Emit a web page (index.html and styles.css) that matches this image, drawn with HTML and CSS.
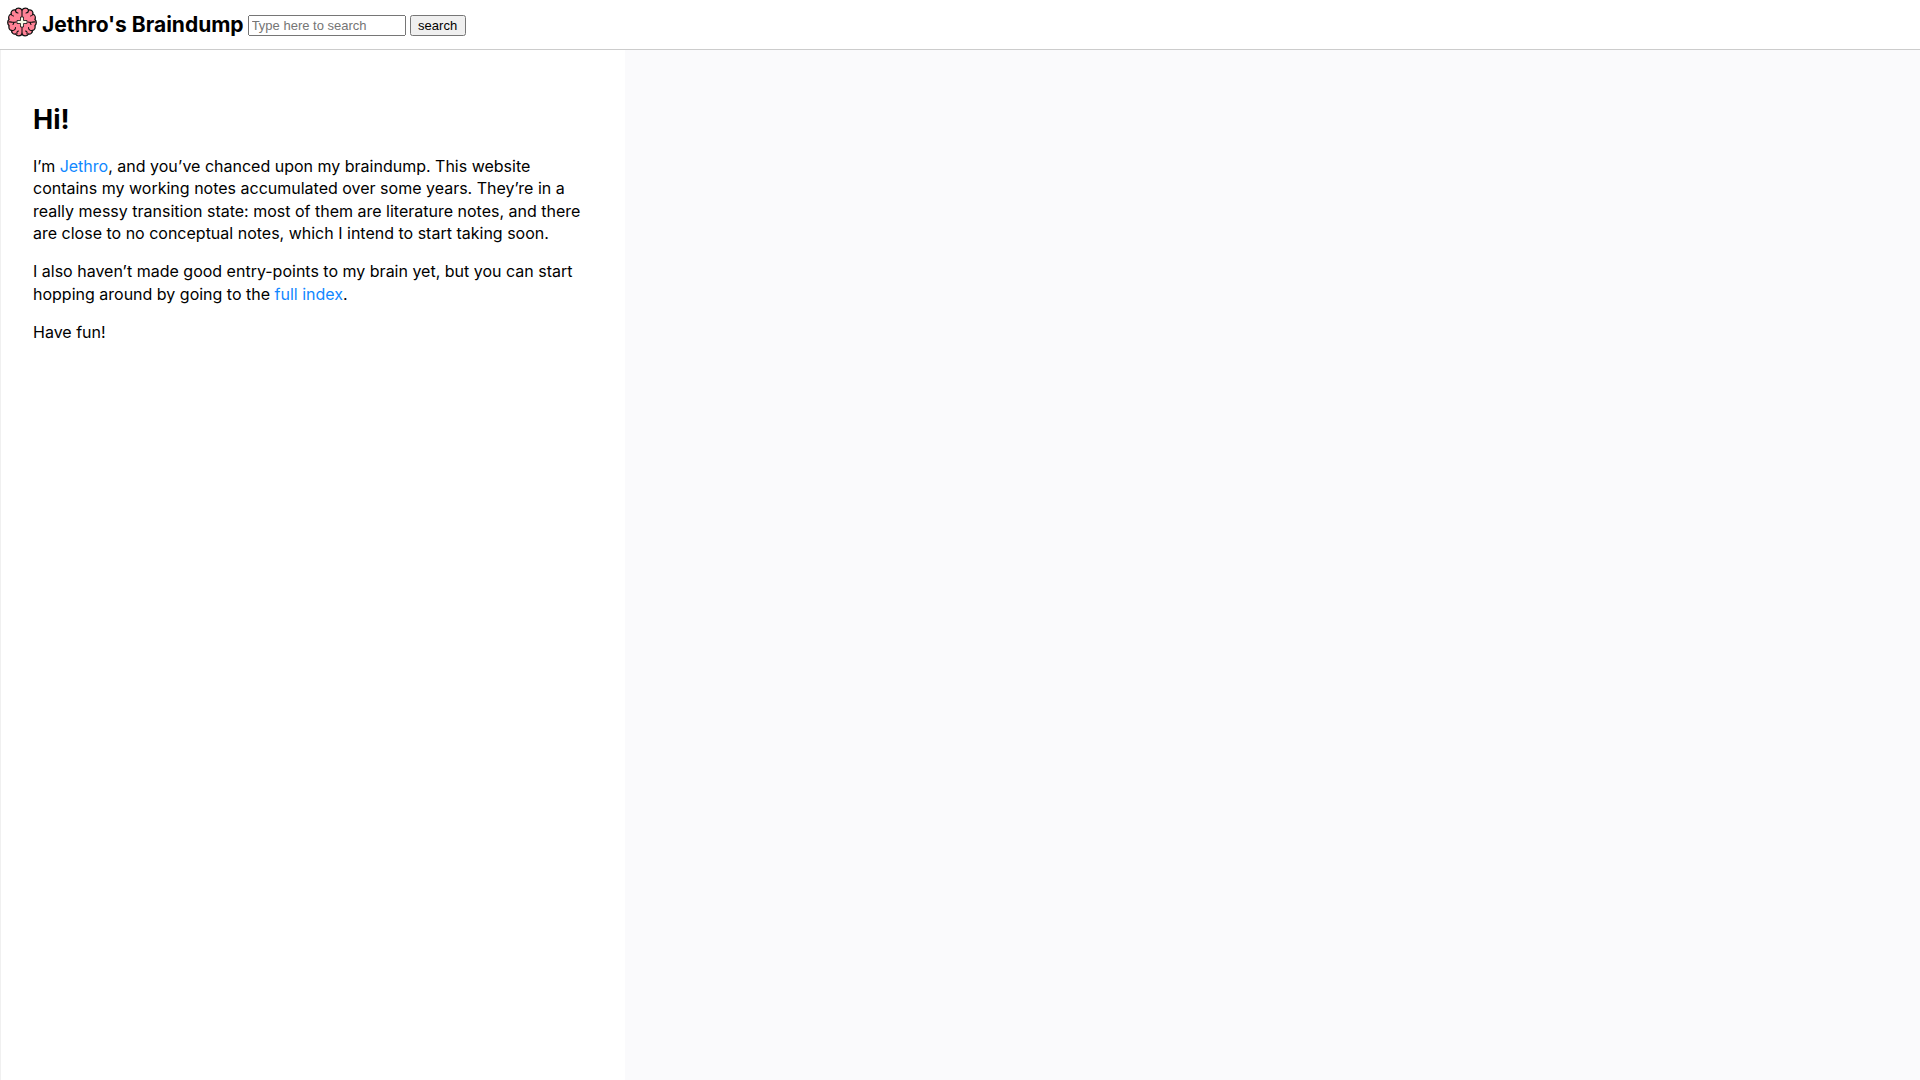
FILE: index.html
```html
<!DOCTYPE html>
<html lang="en">
<head>
<meta charset="utf-8">
<meta name="viewport" content="width=device-width, initial-scale=1">
<title>Jethro's Braindump</title>
<link rel="stylesheet" href="styles.css">
</head>
<body>
<header class="header">
  <a class="brand" href="/">
    <svg class="logo" viewBox="0 0 30 30" aria-hidden="true">
      <path class="lobe" d="M15 3C13.500 .5 9.500 .5 8.500 3 5.500 2.500 3.500 4.500 4.200 7 1.800 8 1.200 10.500 2 12.500 .3 14 .3 17 2 18.500 1.500 21 2.500 23 4.500 23.500 4.500 26 6.500 27.500 8.500 27 10 29.500 14 29.500 15 27 16 29.500 20 29.500 21.500 27 23.500 27.500 25.500 26 25.500 23.500 27.500 23 28.500 21 28 18.500 29.700 17 29.700 14 28 12.500 28.800 10.500 28.200 8 25.800 7 26.500 4.500 24.500 2.500 21.500 3 20.500 .5 16.500 .5 15 3Z"/>
      <path class="fold" d="M15 3V10M15 20V27M8.500 3C8.500 5 9.500 6 11 6M21.500 3C21.500 5 20.500 6 19 6M4.200 7C4.500 8.500 5.500 9 6.500 9M25.800 7C25.500 8.500 24.500 9 23.500 9M2 15C4 14.500 5.500 16 9 15M6 17.500 7 15.500M28 15C26 14.500 24.500 16 21 15M24 17.500 23 15.500M4.500 23.500C7 24 8.500 22.500 8.500 20.500M25.500 23.500C23 24 21.500 22.500 21.500 20.500M10 27C9.500 25 10.500 24 11.500 24M20 27C20.500 25 19.500 24 18.500 24"/>
      <path class="cross" d="M13.500 10H16.500V13.500H20V16.500H16.500V20H13.500V16.500H10V13.500H13.500Z"/>
    </svg>
    <span class="brand-name">Jethro's Braindump</span>
  </a>
  <form class="search">
    <input class="search-box" type="text" aria-label="Search notes" placeholder="Type here to search">
    <button class="search-button" type="submit">search</button>
  </form>
</header>
<main class="notes">
  <article class="note">
    <h1 class="note-title">Hi!</h1>
    <p>I’m <a href="#">Jethro</a>, and you’ve chanced upon my braindump. This website contains my working notes accumulated over some years. They’re in a really messy transition state: most of them are literature notes, and there are close to no conceptual notes, which I intend to start taking soon.</p>
    <p>I also haven’t made good entry-points to my brain yet, but you can start hopping around by going to the <a href="#">full index</a>.</p>
    <p>Have fun!</p>
  </article>
</main>
</body>
</html>
```
FILE: styles.css
```css
* { box-sizing: border-box; }

body {
  margin: 0;
  min-height: 100vh;
  display: flex;
  flex-direction: column;
  background: #fff;
  color: #000;
  font: 16px/1.4 Inter, "Liberation Sans", sans-serif;
}

.header {
  display: flex;
  align-items: flex-start;
  gap: 4px;
  padding: 7px 7px 9px;
  border-bottom: 1px solid #ccc;
}

.brand {
  display: flex;
  align-items: flex-start;
  gap: 5px;
  color: #000;
  text-decoration: none;
}

.logo { width: 30px; height: 30px; }
.lobe { fill: #ff8296; stroke: #111; stroke-width: 1.3; }
.fold { fill: none; stroke: #111; stroke-width: 1.1; stroke-linecap: round; }
.cross { fill: #f5fbe6; stroke: #111; stroke-width: .8; }

.brand-name {
  padding-top: 3px;
  font-size: 21px;
  line-height: 30px;
  font-weight: 700;
}

.search {
  display: flex;
  gap: 4px;
  padding-top: 8px;
}

.search-box,
.search-button {
  height: 21px;
  font: 13px "Liberation Sans", Arial, sans-serif;
}

.search-box { width: 158px; }
.search-button { width: 56px; }

.notes {
  flex: 1;
  display: flex;
  background: #fafafc;
}

.note {
  width: 625px;
  max-width: 100%;
  padding: 32px;
  background: #fff;
  border-left: 1px solid #f0f0f0;
}

.note-title {
  margin: 19px 0 16px;
  font-size: 27px;
  line-height: 1.4;
  font-weight: 700;
}

.note p { margin: 0 0 16px; }

.note a {
  color: #1187ff;
  text-decoration: none;
}
```
